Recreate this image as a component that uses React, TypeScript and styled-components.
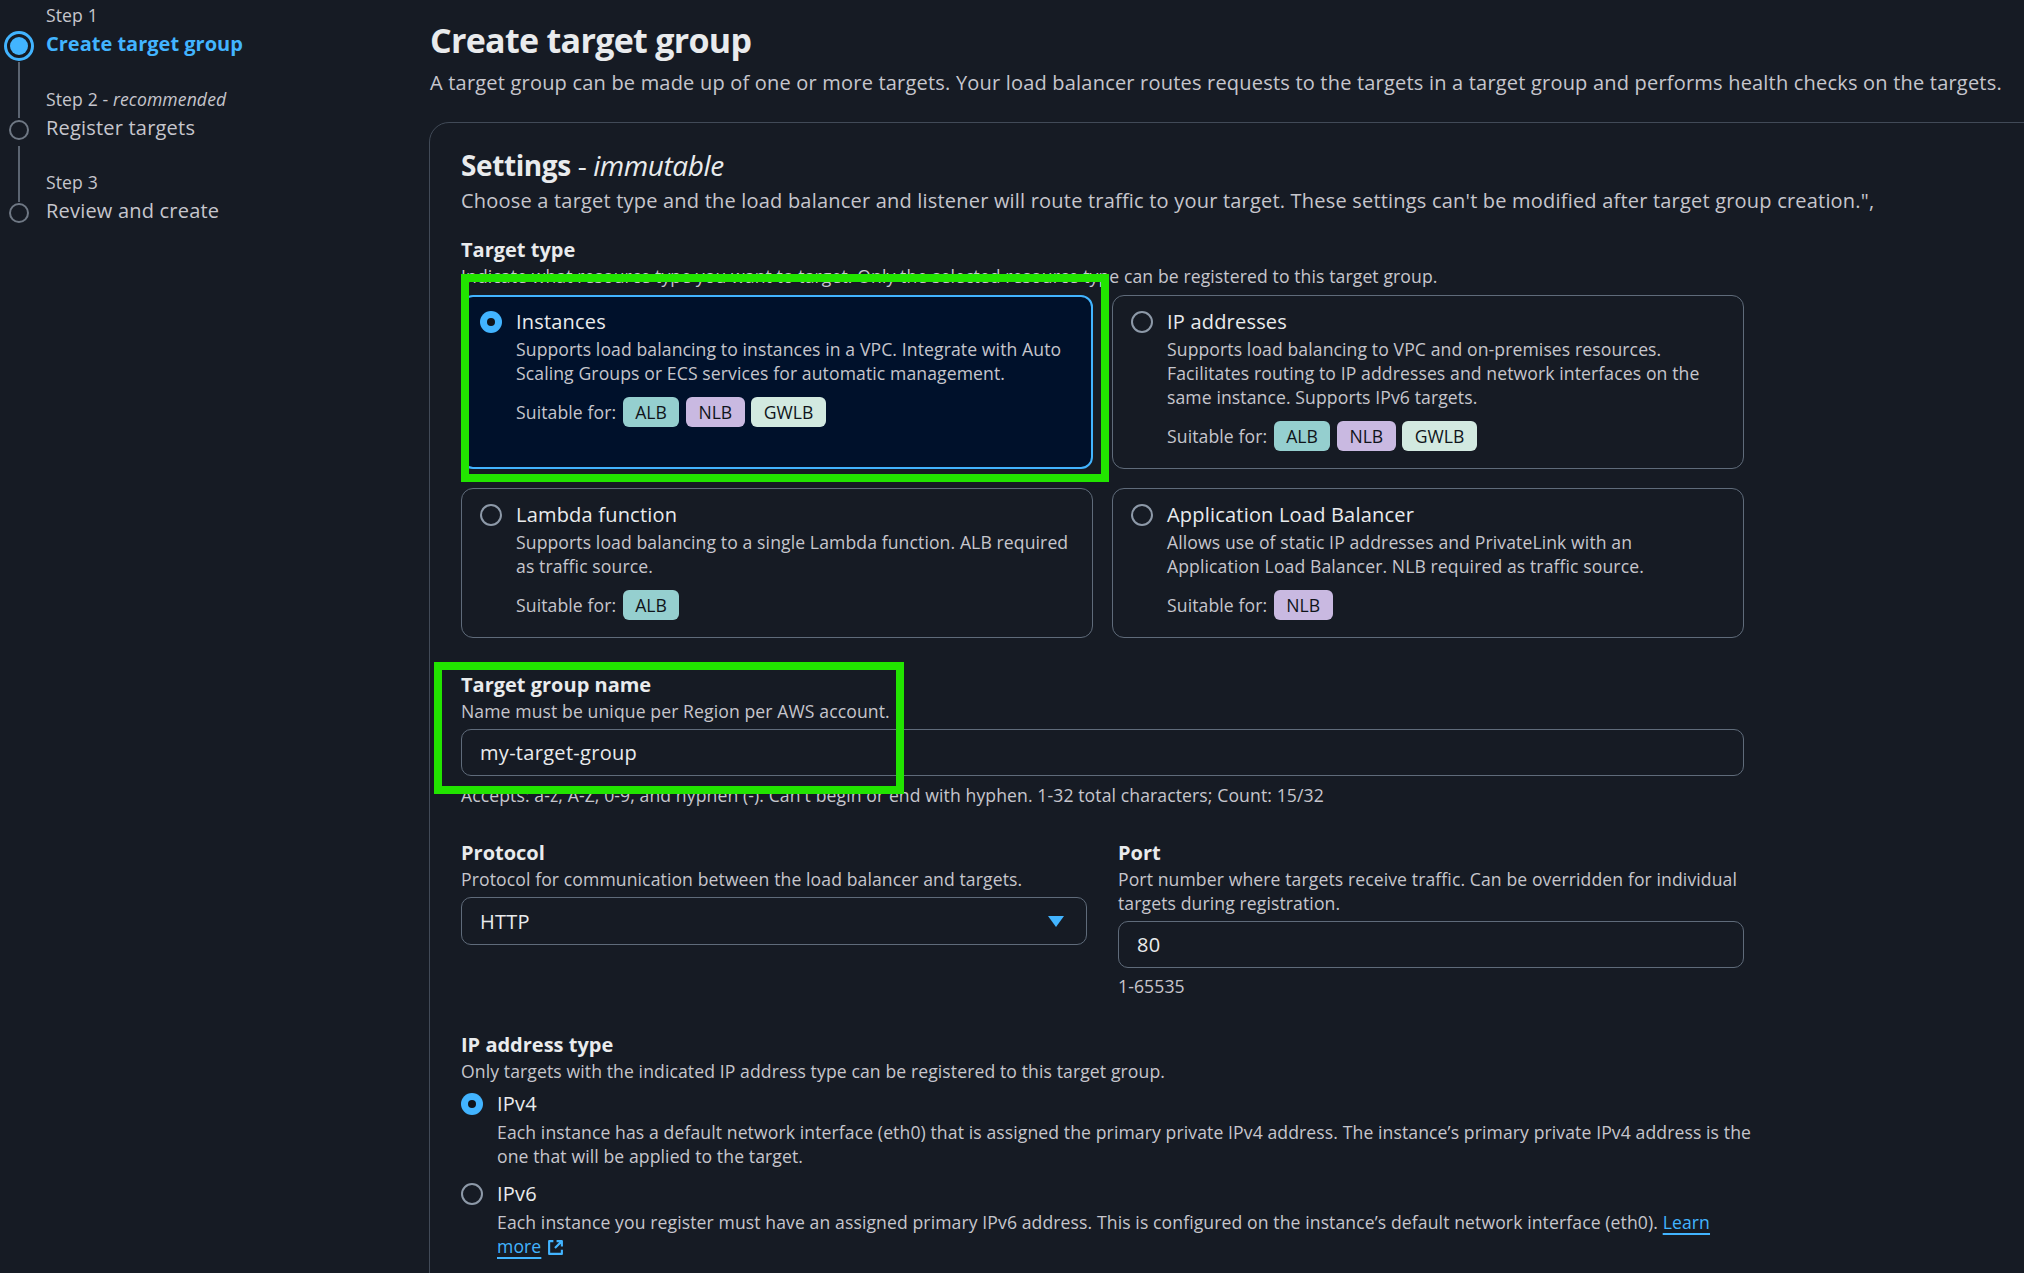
import React from "react";
import styled, { createGlobalStyle, css } from "styled-components";

const GlobalStyle = createGlobalStyle`
  html, body {
    margin: 0;
    padding: 0;
    background: #161b24;
    overflow: hidden;
  }
  body {
    font-family: "Open Sans", "Noto Sans", Arial, sans-serif;
    color: #c6c6cd;
  }
  * {
    box-sizing: border-box;
  }
`;

// shared type scales
const smallText = css`
  font-size: 17.6px;
  line-height: 24px;
  letter-spacing: 0.1px;
`;

const bodyText = css`
  font-size: 20px;
  line-height: 28px;
  letter-spacing: 0.2px;
`;

type TagKind = "alb" | "nlb" | "gwlb";

interface TargetTypeOption {
  title: string;
  description: string;
  tags: TagKind[];
  selected?: boolean;
}

const targetTypes: TargetTypeOption[] = [
  {
    title: "Instances",
    description:
      "Supports load balancing to instances in a VPC. Integrate with Auto Scaling Groups or ECS services for automatic management.",
    tags: ["alb", "nlb", "gwlb"],
    selected: true,
  },
  {
    title: "IP addresses",
    description:
      "Supports load balancing to VPC and on-premises resources. Facilitates routing to IP addresses and network interfaces on the same instance. Supports IPv6 targets.",
    tags: ["alb", "nlb", "gwlb"],
  },
  {
    title: "Lambda function",
    description:
      "Supports load balancing to a single Lambda function. ALB required as traffic source.",
    tags: ["alb"],
  },
  {
    title: "Application Load Balancer",
    description:
      "Allows use of static IP addresses and PrivateLink with an Application Load Balancer. NLB required as traffic source.",
    tags: ["nlb"],
  },
];

const tagColors: Record<TagKind, string> = {
  alb: "#95cfcf",
  nlb: "#c9b9e1",
  gwlb: "#d2e9e0",
};

const steps = [
  { caption: "Step 1", title: "Create target group", active: true },
  { caption: "Step 2", note: "recommended", title: "Register targets" },
  { caption: "Step 3", title: "Review and create" },
];

const ExternalIcon = () => (
  <svg width="17" height="17" viewBox="0 0 16 16" fill="none">
    <path
      d="M6 2H2v12h12v-4"
      stroke="#42b4ff"
      strokeWidth="2"
      strokeLinejoin="round"
    />
    <path
      d="M9 2h5v5M14 2 7.5 8.5"
      stroke="#42b4ff"
      strokeWidth="2"
      strokeLinejoin="round"
    />
  </svg>
);

const Caret = () => (
  <svg width="16" height="11" viewBox="0 0 16 11">
    <path d="M0 0h16L8 11z" fill="#42b4ff" />
  </svg>
);

const App: React.FC = () => {
  return (
    <>
      <GlobalStyle />
      <Page>
        <Sidebar>
          <StepList>
            {steps.map((step, i) => (
              <StepItem key={step.title} $last={i === steps.length - 1}>
                <StepCaption>
                  {step.caption}
                  {step.note && (
                    <>
                      {" - "}
                      <em>{step.note}</em>
                    </>
                  )}
                </StepCaption>
                <StepMarker $active={!!step.active} />
                <StepTitle $active={!!step.active}>{step.title}</StepTitle>
              </StepItem>
            ))}
          </StepList>
        </Sidebar>

        <Main>
          <PageTitle>Create target group</PageTitle>
          <PageSubtitle>
            A target group can be made up of one or more targets. Your load
            balancer routes requests to the targets in a target group and
            performs health checks on the targets.
          </PageSubtitle>

          <Panel>
            <PanelTitle>
              Settings<Qualifier> - </Qualifier>
              <Qualifier $italic>immutable</Qualifier>
            </PanelTitle>
            <PanelDescription>
              Choose a target type and the load balancer and listener will
              route traffic to your target. These settings can't be modified
              after target group creation.",
            </PanelDescription>

            <FormBody>
              <Field $gap={21}>
                <FieldLabel>Target type</FieldLabel>
                <FieldDescription>
                  Indicate what resource type you want to target. Only the
                  selected resource type can be registered to this target group.
                </FieldDescription>
                <TileGrid>
                  {targetTypes.map((option) => (
                    <Tile key={option.title} $selected={!!option.selected}>
                      <Radio $checked={!!option.selected} />
                      <TileBody>
                        <TileTitle>{option.title}</TileTitle>
                        <TileText>{option.description}</TileText>
                        <SuitableRow>
                          <span>Suitable for:</span>
                          {option.tags.map((tag) => (
                            <Tag key={tag} $kind={tag}>
                              {tag.toUpperCase()}
                            </Tag>
                          ))}
                        </SuitableRow>
                      </TileBody>
                      {option.selected && (
                        <Highlight
                          $top={-23}
                          $left={-2}
                          $width={648}
                          $height={208}
                        />
                      )}
                    </Tile>
                  ))}
                </TileGrid>
              </Field>

              <Field $gap={33}>
                <FieldLabel>Target group name</FieldLabel>
                <FieldDescription>
                  Name must be unique per Region per AWS account.
                </FieldDescription>
                <TextInput readOnly value="my-target-group" />
                <FieldHint $gap={7}>
                  Accepts: a-z, A-Z, 0-9, and hyphen (-). Can't begin or end
                  with hyphen. 1-32 total characters; Count: 15/32
                </FieldHint>
                <Highlight $top={-9} $left={-27} $width={470} $height={132} />
              </Field>

              <FieldRow>
                <div>
                  <FieldLabel>Protocol</FieldLabel>
                  <FieldDescription>
                    Protocol for communication between the load balancer and
                    targets.
                  </FieldDescription>
                  <Select>
                    <span>HTTP</span>
                    <Caret />
                  </Select>
                </div>
                <div>
                  <FieldLabel>Port</FieldLabel>
                  <FieldDescription>
                    Port number where targets receive traffic. Can be
                    overridden for individual targets during registration.
                  </FieldDescription>
                  <TextInput readOnly value="80" />
                  <FieldHint $gap={6}>1-65535</FieldHint>
                </div>
              </FieldRow>

              <Field $gap={33}>
                <FieldLabel>IP address type</FieldLabel>
                <FieldDescription>
                  Only targets with the indicated IP address type can be
                  registered to this target group.
                </FieldDescription>
                <RadioGroup>
                  <RadioOption $gap={0}>
                    <Radio $checked />
                    <div>
                      <OptionTitle>IPv4</OptionTitle>
                      <OptionText>
                        Each instance has a default network interface (eth0)
                        that is assigned the primary private IPv4 address. The
                        instance’s primary private IPv4 address is the one that
                        will be applied to the target.
                      </OptionText>
                    </div>
                  </RadioOption>
                  <RadioOption $gap={12}>
                    <Radio $checked={false} />
                    <div>
                      <OptionTitle>IPv6</OptionTitle>
                      <OptionText>
                        Each instance you register must have an assigned
                        primary IPv6 address. This is configured on the
                        instance’s default network interface (eth0).{" "}
                        <LearnLink href="#">Learn</LearnLink>{" "}
                        <LinkTail>
                          <LearnLink href="#">more</LearnLink>
                          <ExternalIcon />
                        </LinkTail>
                      </OptionText>
                    </div>
                  </RadioOption>
                </RadioGroup>
              </Field>
            </FormBody>
          </Panel>
        </Main>
      </Page>
    </>
  );
};

export default App;

const Page = styled.div`
  display: flex;
  min-height: 100vh;
`;

const Sidebar = styled.nav`
  flex: 0 0 429px;
  padding-top: 3px;
`;

const StepList = styled.ol`
  list-style: none;
  margin: 0;
  padding: 0;
`;

const StepItem = styled.li<{ $last: boolean }>`
  position: relative;
  display: grid;
  grid-template-columns: 37px 1fr;
  grid-template-rows: 26px 30px;
  column-gap: 9px;
  margin-bottom: 27.5px;

  &::after {
    content: "";
    display: ${(p) => (p.$last ? "none" : "block")};
    position: absolute;
    left: 17.5px;
    top: 59px;
    width: 2px;
    height: 56px;
    background: #5b6471;
  }
`;

const StepCaption = styled.div`
  grid-column: 2;
  grid-row: 1;
  ${smallText};
  color: #c6c6cd;

  em {
    font-style: italic;
  }
`;

const StepMarker = styled.span<{ $active: boolean }>`
  grid-column: 1;
  grid-row: 2;
  align-self: center;
  justify-self: center;
  margin-top: 4px;
  position: relative;
  width: ${(p) => (p.$active ? 30 : 20)}px;
  height: ${(p) => (p.$active ? 30 : 20)}px;
  border-radius: 50%;
  border: ${(p) => (p.$active ? "3.5px solid #42b4ff" : "2.5px solid #6f7884")};

  &::after {
    content: "";
    display: ${(p) => (p.$active ? "block" : "none")};
    position: absolute;
    inset: 3px;
    border-radius: 50%;
    background: #42b4ff;
  }
`;

const StepTitle = styled.div<{ $active: boolean }>`
  grid-column: 2;
  grid-row: 2;
  font-size: 20px;
  line-height: 30px;
  letter-spacing: ${(p) => (p.$active ? 0 : 0.2)}px;
  font-weight: ${(p) => (p.$active ? 700 : 400)};
  color: ${(p) => (p.$active ? "#42b4ff" : "#c6c6cd")};
`;

const Main = styled.main`
  flex: 0 0 1700px;
  padding-top: 19px;
`;

const PageTitle = styled.h1`
  margin: 0 0 0 1px;
  font-size: 34px;
  line-height: 42px;
  font-weight: 700;
  letter-spacing: -0.7px;
  color: #e9ebed;
`;

const PageSubtitle = styled.p`
  margin: 8px 0 0 1px;
  ${bodyText};
  color: #c6c6cd;
`;

const Panel = styled.section`
  margin-top: 25px;
  min-height: 1200px;
  border: 1px solid #414a57;
  border-radius: 20px 0 0 0;
  padding: 24px 31px 40px;
`;

const PanelTitle = styled.h2`
  margin: 0;
  font-size: 28px;
  line-height: 36px;
  font-weight: 700;
  letter-spacing: -0.4px;
  color: #e9ebed;
`;

const Qualifier = styled.span<{ $italic?: boolean }>`
  font-weight: 400;
  font-style: ${(p) => (p.$italic ? "italic" : "normal")};
`;

const PanelDescription = styled.p`
  margin: 4px 0 0;
  ${bodyText};
  color: #c6c6cd;
`;

const FormBody = styled.div`
  max-width: 1283px;
`;

const Field = styled.div<{ $gap: number }>`
  position: relative;
  margin-top: ${(p) => p.$gap}px;
`;

const FieldLabel = styled.div`
  font-size: 20px;
  line-height: 28px;
  font-weight: 700;
  color: #e9ebed;
`;

const FieldDescription = styled.div`
  ${smallText};
  color: #c6c6cd;
`;

const FieldHint = styled.div<{ $gap: number }>`
  margin-top: ${(p) => p.$gap}px;
  ${smallText};
  color: #c6c6cd;
`;

const TileGrid = styled.div`
  display: grid;
  grid-template-columns: 1fr 1fr;
  gap: 19px;
  margin-top: 7px;
`;

const Tile = styled.div<{ $selected: boolean }>`
  position: relative;
  display: grid;
  grid-template-columns: 22px 1fr;
  column-gap: 14px;
  align-content: start;
  border-radius: 12px;
  border: ${(p) => (p.$selected ? "2px solid #42b4ff" : "1px solid #5f6b7a")};
  padding: ${(p) => (p.$selected ? "11px 17px 16px" : "12px 18px 17px")};
  background: ${(p) => (p.$selected ? "#00112b" : "transparent")};
`;

const Radio = styled.span<{ $checked: boolean }>`
  position: relative;
  align-self: start;
  margin-top: 3px;
  width: 22px;
  height: 22px;
  border-radius: 50%;
  background: ${(p) => (p.$checked ? "#42b4ff" : "transparent")};
  border: ${(p) => (p.$checked ? "none" : "2px solid #8d99a8")};

  &::after {
    content: "";
    display: ${(p) => (p.$checked ? "block" : "none")};
    position: absolute;
    left: 7px;
    top: 7px;
    width: 8px;
    height: 8px;
    border-radius: 50%;
    background: #0f141a;
  }
`;

const TileBody = styled.div`
  min-width: 0;
`;

const TileTitle = styled.div`
  ${bodyText};
  color: #e9ebed;
`;

const TileText = styled.div`
  margin-top: 1px;
  ${smallText};
  color: #c6c6cd;
`;

const SuitableRow = styled.div`
  display: flex;
  align-items: center;
  gap: 6.5px;
  margin-top: 12px;
  ${smallText};
  color: #c6c6cd;
`;

const Tag = styled.span<{ $kind: TagKind }>`
  display: inline-flex;
  align-items: center;
  height: 30px;
  padding: 0 12.5px;
  border-radius: 6px;
  font-size: 17.6px;
  letter-spacing: 0;
  color: #0f141a;
  background: ${(p) => tagColors[p.$kind]};
`;

const Highlight = styled.div<{
  $top: number;
  $left: number;
  $width: number;
  $height: number;
}>`
  position: absolute;
  top: ${(p) => p.$top}px;
  left: ${(p) => p.$left}px;
  width: ${(p) => p.$width}px;
  height: ${(p) => p.$height}px;
  border: 8px solid #22e400;
  pointer-events: none;
  z-index: 2;
`;

const TextInput = styled.input`
  display: block;
  width: 100%;
  height: 47px;
  margin-top: 6px;
  padding: 0 18px;
  border: 1px solid #5f6b7a;
  border-radius: 10px;
  background: transparent;
  font-family: inherit;
  font-size: 20px;
  letter-spacing: 0.3px;
  color: #e9ebed;
  outline: none;
`;

const Select = styled.div`
  display: flex;
  align-items: center;
  justify-content: space-between;
  height: 48px;
  margin-top: 6px;
  padding: 0 22px 0 18px;
  border: 1px solid #5f6b7a;
  border-radius: 10px;
  font-size: 20px;
  letter-spacing: 0.2px;
  color: #e9ebed;
`;

const FieldRow = styled.div`
  display: grid;
  grid-template-columns: 1fr 1fr;
  column-gap: 31px;
  margin-top: 32px;
`;

const RadioGroup = styled.div`
  margin-top: 7px;
  margin-right: -12px;
`;

const RadioOption = styled.div<{ $gap: number }>`
  display: grid;
  grid-template-columns: 22px 1fr;
  column-gap: 14px;
  margin-top: ${(p) => p.$gap}px;
`;

const OptionTitle = styled.div`
  ${bodyText};
  color: #e9ebed;
`;

const OptionText = styled.div`
  margin-top: 2px;
  ${smallText};
  color: #c6c6cd;
`;

const LearnLink = styled.a`
  color: #42b4ff;
  text-decoration: underline;
  text-decoration-thickness: 2px;
  text-underline-offset: 4px;
`;

const LinkTail = styled.span`
  display: inline-flex;
  align-items: center;
  gap: 6px;
  vertical-align: top;

  svg {
    margin-top: 2px;
  }
`;
